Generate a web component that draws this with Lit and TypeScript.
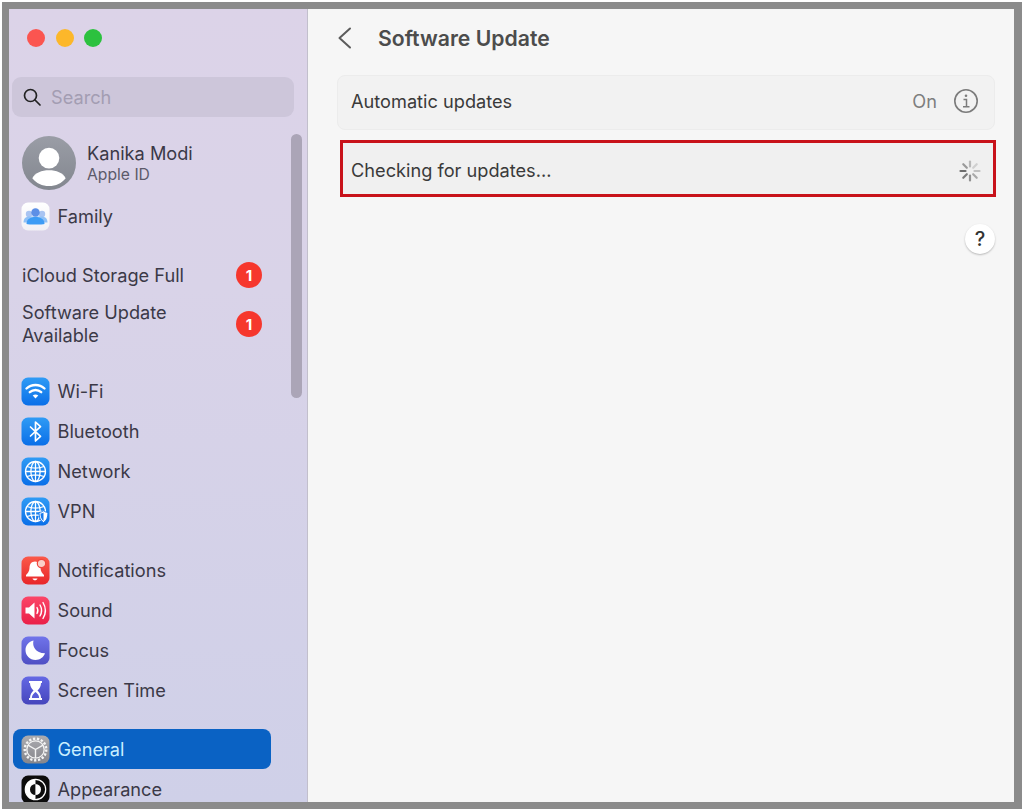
import { LitElement, html, css, svg } from "lit";
import { customElement } from "lit/decorators.js";

const tile = (id: string, a: string, b: string, body: unknown) => html`<svg class="ico" viewBox="0 0 29 29">
  <defs><linearGradient id=${id} x1="0" y1="0" x2="0" y2="1"><stop offset="0" stop-color=${a}></stop><stop offset="1" stop-color=${b}></stop></linearGradient></defs>
  <rect x="0.5" y="0.5" width="28" height="28" rx="6.5" fill="url(#${id})"></rect>${body}</svg>`;

const globe = svg`<g fill="none" stroke="#fff" stroke-width="1.3"><circle cx="14.5" cy="14.5" r="10"></circle><ellipse cx="14.5" cy="14.5" rx="4.6" ry="10"></ellipse><path d="M14.5 4.5v20M4.5 14.5h20M6 9.5c5 2 12 2 17 0M6 19.5c5-2 12-2 17 0"></path></g>`;

const icons: Record<string, () => unknown> = {
  family: () => tile("g-fam", "#ffffff", "#f1f0f5", svg`
    <circle cx="8" cy="12" r="3.200" fill="#a9c4f2"></circle><circle cx="21" cy="12" r="3.200" fill="#a9c4f2"></circle>
    <path d="M2.500 20.500c0-4.500 3-6 6-6h12c3 0 6 1.500 6 6z" fill="#8fc0f6"></path>
    <circle cx="14.500" cy="10.500" r="4.200" fill="#5d8fe6"></circle>
    <path d="M5.500 22c0-5 4-7 9-7s9 2 9 7c-2 .8-16 .8-18 0z" fill="#3d9cf5"></path>`),
  wifi: () => tile("g-wifi", "#2f9bf5", "#0a6fe8", svg`
    <g fill="none" stroke="#fff" stroke-width="2.400" stroke-linecap="round"><path d="M5.500 11.500c5-4.700 13-4.700 18 0"></path><path d="M8.800 15.200c3.300-3 8.100-3 11.400 0"></path></g>
    <path d="M11.700 18.600c1.700-1.400 3.900-1.400 5.600 0l-2.800 3z" fill="#fff"></path>`),
  bluetooth: () => tile("g-bt", "#2f9bf5", "#0a6fe8", svg`
    <path d="M9.500 10l10 9.300-5 4.700V5l5 4.700-10 9.300" fill="none" stroke="#fff" stroke-width="1.700" stroke-linejoin="round" stroke-linecap="round"></path>`),
  network: () => tile("g-net", "#2f9bf5", "#0a6fe8", globe),
  vpn: () => tile("g-vpn", "#2f9bf5", "#0a6fe8", svg`${globe}
    <path d="M18 15.500c2-.2 3.500-1 4.500-1.700 1 .7 2.500 1.500 4.500 1.700 0 5-1.500 8.500-4.500 10-3-1.500-4.500-5-4.500-10z" fill="#fff" stroke="#1a7bec" stroke-width="1"></path>
    <path d="M22.500 15.500v8.500c-2-1.300-3-4-3-7.500 1.200-.1 2.200-.5 3-1z" fill="#1a7bec"></path>`),
  notifications: () => tile("g-not", "#fb5a4a", "#e8262a", svg`
    <path d="M14 5.500c3.500 0 5.500 2.800 5.500 6.500 0 3.500 2 5.300 3.500 7v1.500H5V19c1.500-1.700 3.500-3.500 3.500-7 0-3.700 2-6.500 5.500-6.500z" fill="#fff"></path>
    <path d="M11.500 22.500h5c-.4 1.200-1.300 1.800-2.500 1.800s-2.100-.6-2.500-1.800z" fill="#fff"></path>
    <circle cx="20.500" cy="7.500" r="4.200" fill="#fbd0c8" stroke="#f0453c" stroke-width="1.200"></circle>`),
  sound: () => tile("g-snd", "#fb4668", "#ea2048", svg`
    <path d="M4.500 11.500h3.500l5.500-5v16l-5.500-5H4.500z" fill="#fff"></path>
    <g fill="none" stroke="#fff" stroke-width="1.400" stroke-linecap="round"><path d="M16 11.500c1.200 2 1.200 4 0 6"></path><path d="M19 9c2 3.500 2 7.500 0 11"></path><path d="M22 6.500c3 5 3 11 0 16"></path></g>`),
  focus: () => tile("g-foc", "#7074ea", "#4f4fc4", svg`
    <path d="M12.500 4.500c-1.500 6 2 12.500 11.500 12.800-1.500 4-5 6.700-9.500 6.700-5.800 0-10-4.500-10-10 0-4.500 3.300-8.500 8-9.500z" fill="#fff"></path>`),
  screentime: () => tile("g-st", "#6468e4", "#4646bc", svg`
    <path d="M8 5h13v2h-1c0 3.500-1.500 5.500-3.500 7.500 2 2 3.500 4 3.500 7.500h1v2H8v-2h1c0-3.500 1.500-5.500 3.500-7.500C10.500 12.500 9 10.500 9 7H8z" fill="#fff"></path>
    <path d="M12 18.500c1-1.200 1.700-1.800 2.500-2.500.8.700 1.500 1.300 2.500 2.500 .7 1 1 2 1.100 3.500h-7.200c.1-1.500.4-2.500 1.100-3.500z" fill="#5a5ed8"></path>`),
  general: () => tile("g-gen", "#acacb0", "#86868c", svg`
    <circle cx="14.500" cy="14.500" r="10.800" fill="none" stroke="#f4f4f4" stroke-width="2.400" stroke-dasharray="2.300 1.700"></circle>
    <circle cx="14.500" cy="14.500" r="8.700" fill="none" stroke="#f4f4f4" stroke-width="1.300"></circle>
    <path d="M14.500 14.500L7 10.200M14.500 14.500L22 10.200M14.500 14.500V23" stroke="#f4f4f4" stroke-width="1.400"></path>`),
  appearance: () => tile("g-app", "#0c0c0c", "#0c0c0c", svg`
    <circle cx="14.500" cy="14.500" r="10.200" fill="none" stroke="#fff" stroke-width="1.200"></circle>
    <path d="M14.500 4.300a10.200 10.200 0 0 0 0 20.400z" fill="#fff"></path>
    <path d="M14.500 9a5.500 5.500 0 0 0 0 11z" fill="#111"></path>
    <path d="M14.500 9a5.500 5.500 0 0 1 0 11z" fill="#fff"></path>`),
};

const rows = (items: [string, string][]) => items.map(([k, label]) => html`<div class="row"><span class="slot">${icons[k]()}</span><span>${label}</span></div>`);

const spokes = [0, 1, 2, 3, 4, 5, 6, 7].map((i) => i * 45);
const spokeOpacity = [0.35, 0.2, 0.3, 0.45, 0.6, 0.75, 0.85, 0.55];

@customElement("app-root")
export class AppRoot extends LitElement {
  static styles = css`
    :host { display: block; width: 1024px; height: 812px; background: #fff; box-sizing: border-box; padding: 2px 2px 3px; font-family: Inter, "Noto Sans", sans-serif; color: #3b3947; }
    .frame { box-sizing: border-box; height: 807px; border: 7px solid #8b8b8b; border-right-width: 8px; display: flex; overflow: hidden; background: #f6f6f6; }
    .side { position: relative; width: 298px; flex: none; border-right: 1px solid #c2bfcc; overflow: hidden; background: linear-gradient(180deg, #dcd3e8 0%, #d9d3e8 35%, #cfd0e8 100%); }
    .lights { display: flex; gap: 10.500px; padding: 20px 0 30px 18px; }
    .dot { width: 18px; height: 18px; border-radius: 50%; }
    .red { background: #fb5550; } .yellow { background: #fcb72a; } .green { background: #2cc13f; }
    .search { box-sizing: border-box; height: 40px; margin: 0 13px 0 3px; border-radius: 9px; background: #cdc6da; display: flex; align-items: center; gap: 9px; padding-left: 10px; color: #a39db2; font-size: 18.200px; }
    .search svg { width: 20px; height: 20px; flex: none; }
    .profile { display: flex; align-items: center; gap: 11px; margin: 18px 0 0 13px; height: 55px; }
    .avatar { width: 54px; height: 54px; flex: none; }
    .pname { font-size: 18.200px; line-height: 24px; }
    .psub { font-size: 15.700px; line-height: 20px; color: #5c5a6a; }
    .row { height: 40px; display: flex; align-items: center; gap: 6.500px; padding-left: 12px; font-size: 18.200px; white-space: nowrap; }
    .slot { width: 30px; height: 29px; flex: none; display: flex; }
    .ico { width: 29px; height: 29px; display: block; }
    .family { margin-top: 6px; }
    .group { margin-top: 19px; }
    .alert { display: flex; align-items: center; justify-content: space-between; width: 240px; padding-left: 13px; font-size: 18.200px; line-height: 23px; }
    .alert.one { height: 40px; margin-top: 19px; }
    .alert.two { height: 46px; margin: 6px 0 24px; }
    .badge { width: 26px; height: 26px; border-radius: 50%; background: #f6372d; color: #fff; font-size: 15px; font-weight: 700; display: flex; align-items: center; justify-content: center; }
    .selected { box-sizing: border-box; width: 258px; margin-left: 4px; padding-left: 8px; border-radius: 8px; background: #0a62c4; color: #c9eeff; }
    .thumb { position: absolute; left: 282px; top: 125px; width: 11px; height: 264px; border-radius: 6px; background: #aba5b7; }
    .main { flex: 1; min-width: 0; box-sizing: border-box; padding: 0 19px 0 29px; display: flex; flex-direction: column; }
    .head { box-sizing: border-box; height: 66px; flex: none; display: flex; align-items: center; gap: 25px; padding: 0 0 8px 1px; }
    .head svg { width: 16px; height: 22px; flex: none; margin-left: -1px; }
    .title { font-size: 21.200px; font-weight: 600; color: #4c4c4c; }
    .card { box-sizing: border-box; height: 55px; border: 1px solid #ececec; border-radius: 8px; background: #f2f2f2; display: flex; align-items: center; justify-content: space-between; padding: 0 15px 4px 13px; font-size: 18.200px; color: #3a3a3a; }
    .status { display: flex; align-items: center; gap: 16px; color: #7e7e7e; }
    .status svg { width: 26px; height: 26px; }
    .check { box-sizing: border-box; height: 57px; margin: 10px -1px 0 3px; border: 3px solid #c8121a; background: #f0f0f0; display: flex; align-items: center; justify-content: space-between; padding: 3px 11px 0 8px; font-size: 18.200px; color: #3a3a3a; }
    .check svg { width: 24px; height: 24px; margin-top: 1px; }
    .help { width: 30px; height: 30px; margin: 27px 0 0 auto; border-radius: 50%; background: #fff; box-shadow: 0 1px 2px rgba(0,0,0,.25); display: flex; align-items: center; justify-content: center; font-size: 20px; font-weight: 500; color: #333; flex: none; }
  `;

  render() {
    return html`<div class="frame">
      <aside class="side">
        <div class="lights"><div class="dot red"></div><div class="dot yellow"></div><div class="dot green"></div></div>
        <div class="search"><svg viewBox="0 0 20 20" fill="none" stroke="#222" stroke-width="1.700" stroke-linecap="round"><circle cx="8.500" cy="8.500" r="6"></circle><path d="M13 13l5 5"></path></svg><span>Search</span></div>
        <div class="profile">
          <svg class="avatar" viewBox="0 0 55 55"><defs><linearGradient id="av" x1="0" y1="0" x2="0" y2="1"><stop offset="0" stop-color="#9a9da6"></stop><stop offset="1" stop-color="#83878f"></stop></linearGradient></defs><circle cx="27.500" cy="27.500" r="27.500" fill="url(#av)"></circle><circle cx="27.500" cy="22.500" r="10.500" fill="#fff"></circle><path d="M10.500 43c3-5.500 9.500-8 17-8s14 2.500 17 8c-4 5-10 8-17 8s-13-3-17-8z" fill="#fff"></path></svg>
          <div><div class="pname">Kanika Modi</div><div class="psub">Apple ID</div></div>
        </div>
        <div class="family">${rows([["family", "Family"]])}</div>
        <div class="alert one"><span>iCloud Storage Full</span><span class="badge">1</span></div>
        <div class="alert two"><span>Software Update<br />Available</span><span class="badge">1</span></div>
        ${rows([["wifi", "Wi-Fi"], ["bluetooth", "Bluetooth"], ["network", "Network"], ["vpn", "VPN"]])}
        <div class="group">${rows([["notifications", "Notifications"], ["sound", "Sound"], ["focus", "Focus"], ["screentime", "Screen Time"]])}</div>
        <div class="group">
          <div class="row selected"><span class="slot">${icons.general()}</span><span>General</span></div>
          ${rows([["appearance", "Appearance"]])}
        </div>
        <div class="thumb"></div>
      </aside>
      <main class="main">
        <div class="head">
          <svg viewBox="0 0 16 22" fill="none" stroke="#5c5c5c" stroke-width="2" stroke-linecap="round" stroke-linejoin="round"><path d="M13 1.500L2.500 11 13 20.500"></path></svg>
          <span class="title">Software Update</span>
        </div>
        <div class="card"><span>Automatic updates</span>
          <span class="status"><span>On</span><svg viewBox="0 0 26 26" fill="none" stroke="#7b7b7b"><circle cx="13" cy="13" r="11.200" stroke-width="1.600"></circle><circle cx="13" cy="7.800" r="1.300" fill="#7b7b7b" stroke="none"></circle><path d="M10.500 11.500h3v7M10 18.800h6.500" stroke-width="1.500"></path></svg></span>
        </div>
        <div class="check"><span>Checking for updates...</span>
          <svg viewBox="0 0 24 24">${spokes.map((a, i) => svg`<line x1="12" y1="2.500" x2="12" y2="7.500" stroke="#555" stroke-width="2.200" stroke-linecap="round" opacity=${spokeOpacity[i]} transform="rotate(${a} 12 12)"></line>`)}</svg>
        </div>
        <div class="help">?</div>
      </main>
    </div>`;
  }
}
